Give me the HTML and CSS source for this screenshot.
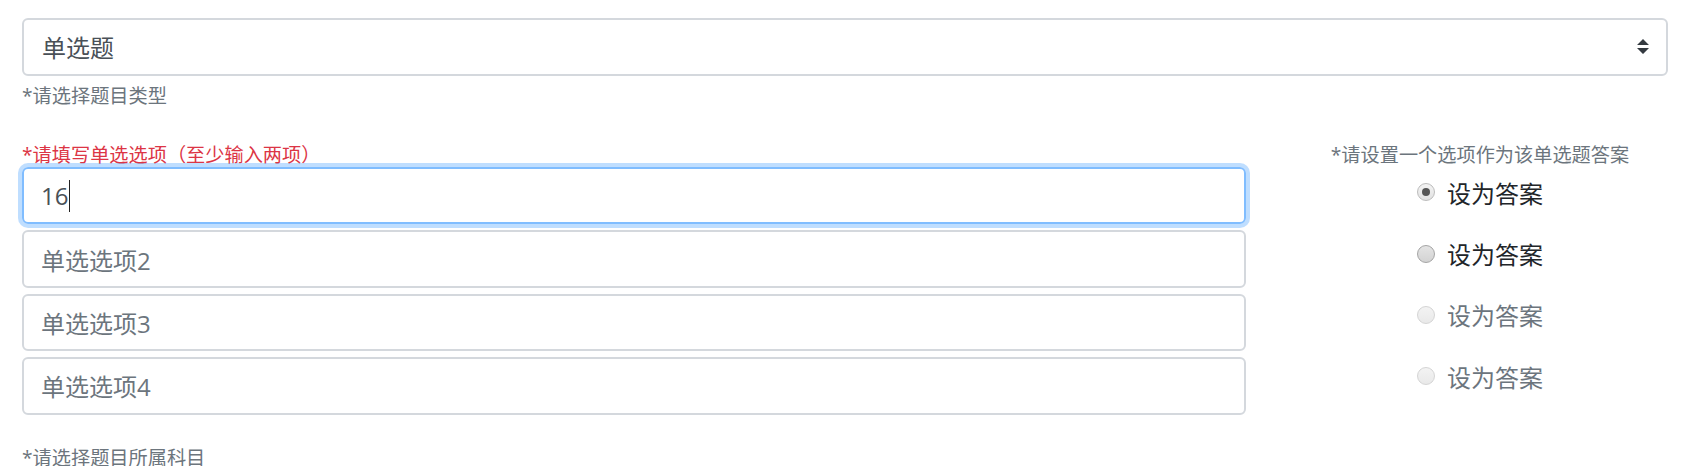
FILE: index.html
```html
<!DOCTYPE html>
<html lang="zh-CN">
<head>
<meta charset="utf-8">
<title>单选题</title>
<link rel="stylesheet" href="styles.css">
</head>
<body>
<div class="page">
  <div class="form-group">
    <div class="select">
      <span class="select-value">单选题</span>
      <svg class="select-arrow" viewBox="0 0 4 5" width="12" height="15"><path d="M2 0L0 2h4zM2 5L0 3h4z" fill="#343a40"/></svg>
    </div>
    <div class="hint hint-top">*请选择题目类型</div>
  </div>

  <div class="options">
    <div class="options-main">
      <div class="label-required">*请填写单选选项（至少输入两项）</div>
      <div class="fields">
        <div class="field is-focused"><span class="field-value">16</span><span class="caret"></span></div>
        <div class="field"><span class="placeholder">单选选项2</span></div>
        <div class="field"><span class="placeholder">单选选项3</span></div>
        <div class="field"><span class="placeholder">单选选项4</span></div>
      </div>
    </div>
    <div class="options-answer">
      <div class="hint hint-answer">*请设置一个选项作为该单选题答案</div>
      <div class="radios">
        <div class="radio"><span class="radio-dot is-checked"></span><span>设为答案</span></div>
        <div class="radio"><span class="radio-dot"></span><span>设为答案</span></div>
        <div class="radio is-disabled"><span class="radio-dot"></span><span>设为答案</span></div>
        <div class="radio is-disabled"><span class="radio-dot"></span><span>设为答案</span></div>
      </div>
    </div>
  </div>

  <div class="hint hint-bottom">*请选择题目所属科目</div>
</div>
</body>
</html>
```

FILE: styles.css
```css
html, body {
  margin: 0;
  background: #ffffff;
  font-family: "Open Sans", "Noto Sans CJK SC", sans-serif;
}

.page {
  padding: 18px 22px 0;
}

.select {
  display: flex;
  align-items: center;
  justify-content: space-between;
  height: 57.6px;
  box-sizing: border-box;
  border: 2px solid #d4d8dd;
  border-radius: 6px;
  padding: 0 17px 0 18px;
  font-size: 24px;
  color: #495057;
}

.select-arrow {
  display: block;
}

.hint {
  font-size: 19.2px;
  line-height: 28.8px;
  color: #6c757d;
}

.hint-top {
  margin-top: 6px;
}

.options {
  display: grid;
  grid-template-columns: 1224px 1fr;
  column-gap: 46px;
  margin-top: 34px;
}

.label-required {
  font-size: 19.2px;
  line-height: 22.5px;
  color: #dc3545;
}

.fields {
  display: flex;
  flex-direction: column;
  gap: 5.8px;
}

.field {
  height: 57.6px;
  box-sizing: border-box;
  border: 2px solid #d4d8dd;
  border-radius: 6px;
  padding: 0 17px;
  display: flex;
  align-items: center;
  font-size: 24px;
  color: #495057;
}

.field.is-focused {
  border-color: #80bdff;
  box-shadow: 0 0 0 4px rgba(0, 123, 255, 0.25);
}

.caret {
  width: 1px;
  height: 32px;
  background: #222;
  margin-left: 1px;
}

.placeholder {
  color: #6c757d;
}

.options-answer {
  display: flex;
  flex-direction: column;
  align-items: center;
}

.hint-answer {
  line-height: 22.5px;
}

.radios {
  display: flex;
  flex-direction: column;
  gap: 25.4px;
  margin-top: 7.3px;
}

.radio {
  display: flex;
  align-items: center;
  gap: 12px;
  height: 36px;
  font-size: 24px;
  color: #212529;
}

.radio.is-disabled {
  color: #6c757d;
}

.radio-dot {
  width: 18px;
  height: 18px;
  box-sizing: border-box;
  border-radius: 50%;
  border: 1px solid #a4a4a4;
  background: linear-gradient(#e4e4e4, #d3d3d3);
  display: flex;
  align-items: center;
  justify-content: center;
}

.radio-dot.is-checked {
  border-color: #bcbcbc;
  background: linear-gradient(#f4f4f4, #e1e1e1);
}

.radio-dot.is-checked::after {
  content: "";
  width: 8px;
  height: 8px;
  border-radius: 50%;
  background: #555555;
}

.radio.is-disabled .radio-dot {
  border-color: #d4d4d4;
  background: linear-gradient(#f3f3f3, #e9e9e9);
}

.hint-bottom {
  margin-top: 29px;
}
```
